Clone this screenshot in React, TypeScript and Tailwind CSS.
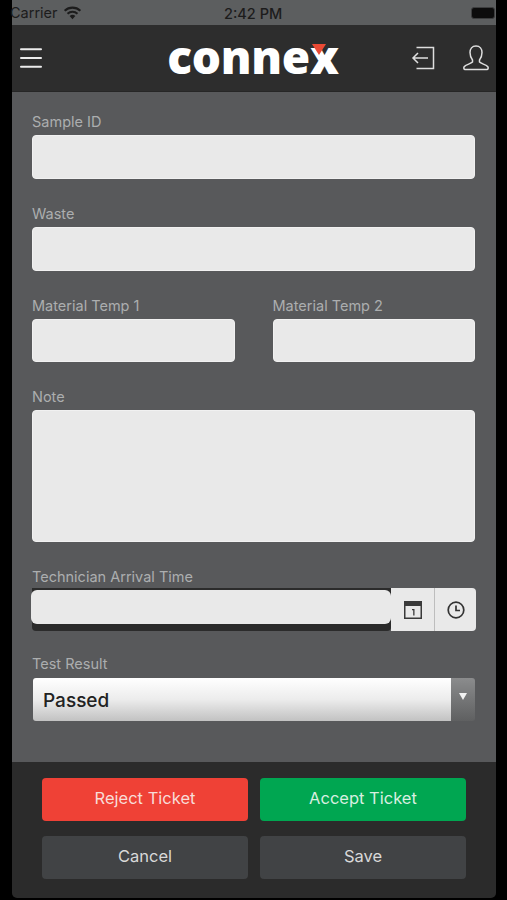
import { Menu } from "lucide-react";

const FONT = "font-['Inter','Liberation_Sans',sans-serif]";

function Label({ text }: { text: string }) {
  return <div className="mb-[3px] h-5 text-[14.5px] leading-5 text-[#acaeaf]">{text}</div>;
}

function Field({ label, height = "h-[44px]" }: { label: string; height?: string }) {
  return (
    <div className="mb-[25px] min-w-0 flex-1">
      <Label text={label} />
      <div className={`${height} rounded-[4px] border border-[#f1f1f1] bg-[#e9e9e9]`} />
    </div>
  );
}

function StatusBar() {
  return (
    <div className="relative flex h-[25px] items-center justify-between bg-[#5c5e5f] text-[14.5px] text-[#1c1c1c]">
      <div className="flex items-center">
        <span className="-ml-[2px]">Carrier</span>
        <svg viewBox="0 0 20 14" className="ml-[5px] h-[14px] w-[19px]" fill="#1c1c1c">
          <path d="M10 13.5 7 10.2a4.4 4.4 0 0 1 6 0Z" />
          <path d="M5.5 8.6 4 7a8.8 8.8 0 0 1 12 0l-1.5 1.6a6.6 6.6 0 0 0-9 0Z" />
          <path d="M2.5 5.4 1 3.8a13.2 13.2 0 0 1 18 0l-1.5 1.6a11 11 0 0 0-15 0Z" />
        </svg>
      </div>
      <span className="absolute top-[3px] left-[212px] font-medium">2:42 PM</span>
      <div className="mr-[1px] h-[12px] w-[24px] rounded-[3px] border border-[#3d3e3f] bg-[#0c0c0c]" />
    </div>
  );
}

function Header() {
  return (
    <div className="grid h-[67px] grid-cols-[1fr_auto_1fr] items-center border-b border-[#262626] bg-[#2d2d2d] pr-[6px] pl-[4px] text-[#ececec]">
      <Menu size={30} strokeWidth={1.6} />
      <div className="relative -mt-[5px] font-['Open_Sans',sans-serif] text-[46px] leading-none font-extrabold tracking-[-0.3px] text-white">
        connex
        <svg viewBox="0 0 14 11" className="absolute top-[11px] right-[13px] h-[11px] w-[14px]">
          <path d="M0 0h14L7 11Z" fill="#ea4a35" />
        </svg>
      </div>
      <div className="flex items-center justify-end gap-[25px]">
        <svg viewBox="0 0 26 26" className="h-[26px] w-[26px]" fill="none" stroke="#dedede" strokeWidth="1.5">
          <path d="M5.5 2.5h17v21h-17" />
          <path d="M17 13H2M7 8l-5 5 5 5" />
        </svg>
        <svg viewBox="0 0 28 28" className="h-[28px] w-[28px]" fill="none" stroke="#dedede" strokeWidth="1.5">
          <path d="M14 2c-4 0-6 3-6 6.5 0 3 1 5.500 2.500 7.500v2c-2 2-7 2.500-8.500 5-.5 1 0 2.500 1 2.500h22c1 0 1.500-1.500 1-2.500-1.500-2.500-6.500-3-8.500-5v-2C19 14 20 11.500 20 8.500 20 5 18 2 14 2Z" />
        </svg>
      </div>
    </div>
  );
}

function DateTimeField() {
  return (
    <div className="mb-[23px]">
      <Label text="Technician Arrival Time" />
      <div className="-mt-[2px] -mr-px flex h-[43px] items-stretch">
        <div className="flex-1 rounded-b-[4px] bg-[#2b2b2b] pt-[2px] pb-[7px]">
          <div className="-ml-px h-full rounded-[6px] bg-[#e9e9e9]" />
        </div>
        <div className="flex w-[44px] items-center justify-center border-r border-[#bdbdbd] bg-[#e9e9e9]">
          <svg viewBox="0 0 18 18" className="h-[18px] w-[18px]">
            <path d="M0 0h18v18H0Z" fill="#3a3a3a" />
            <path d="M1.500 5h15v11.500h-15Z" fill="#e9e9e9" />
            <path d="M8 8h2.500v6.500H9.200V9.200H8Z" fill="#3a3a3a" />
          </svg>
        </div>
        <div className="flex w-[41px] items-center justify-center rounded-r-[4px] bg-[#e9e9e9]">
          <svg viewBox="0 0 18 18" className="h-[18px] w-[18px]" fill="none" stroke="#333" strokeWidth="1.700">
            <circle cx="9" cy="9" r="7.800" />
            <path d="M9 4.500V9.500H13" />
          </svg>
        </div>
      </div>
    </div>
  );
}

function TestResult() {
  return (
    <div>
      <div className="mb-1 h-5 text-[14.5px] leading-5 text-[#acaeaf]">Test Result</div>
      <div className="ml-px flex h-[43px] overflow-hidden rounded-[3px]">
        <div className="flex flex-1 items-center bg-gradient-to-b from-[#ffffff] via-[#ececec] to-[#c2c2c2] pt-[3px] pl-[10px] text-[19px] font-medium text-[#222]">
          Passed
        </div>
        <div className="flex w-[24px] items-start justify-center bg-gradient-to-b from-[#8b8c8d] to-[#5f6061] pt-[15px]">
          <svg viewBox="0 0 8 7" className="h-[7px] w-[8px]">
            <path d="M0 0h8L4 7Z" fill="#f2f2f2" />
          </svg>
        </div>
      </div>
    </div>
  );
}

function Action({ text, className }: { text: string; className: string }) {
  return (
    <div className={`flex h-[43px] items-center justify-center rounded-[4px] pb-[2px] text-[16.5px] ${className}`}>
      {text}
    </div>
  );
}

export default function App() {
  return (
    <div className={`${FONT} h-[900px] w-[507px] overflow-hidden bg-black pr-[11px] pl-[12px]`}>
      <StatusBar />
      <Header />
      <div className="h-[670px] bg-[#58595b] pt-[20px] pr-[21px] pl-[20px]">
        <Field label="Sample ID" />
        <Field label="Waste" />
        <div className="flex gap-[38px]">
          <Field label="Material Temp 1" height="h-[43px]" />
          <Field label="Material Temp 2" height="h-[43px]" />
        </div>
        <Field label="Note" height="h-[132px]" />
        <DateTimeField />
        <TestResult />
      </div>
      <div className="grid h-[136px] grid-cols-2 content-start gap-x-[12px] gap-y-[15px] rounded-b-[5px] bg-[#2b2b2b] pt-[16px] pr-[30px] pl-[30px]">
        <Action text="Reject Ticket" className="bg-[#ef4136] text-[#f8dcd8]" />
        <Action text="Accept Ticket" className="bg-[#00a651] text-[#d8efe0]" />
        <Action text="Cancel" className="bg-[#414345] text-[#d9d9d9]" />
        <Action text="Save" className="bg-[#414345] text-[#d9d9d9]" />
      </div>
    </div>
  );
}
